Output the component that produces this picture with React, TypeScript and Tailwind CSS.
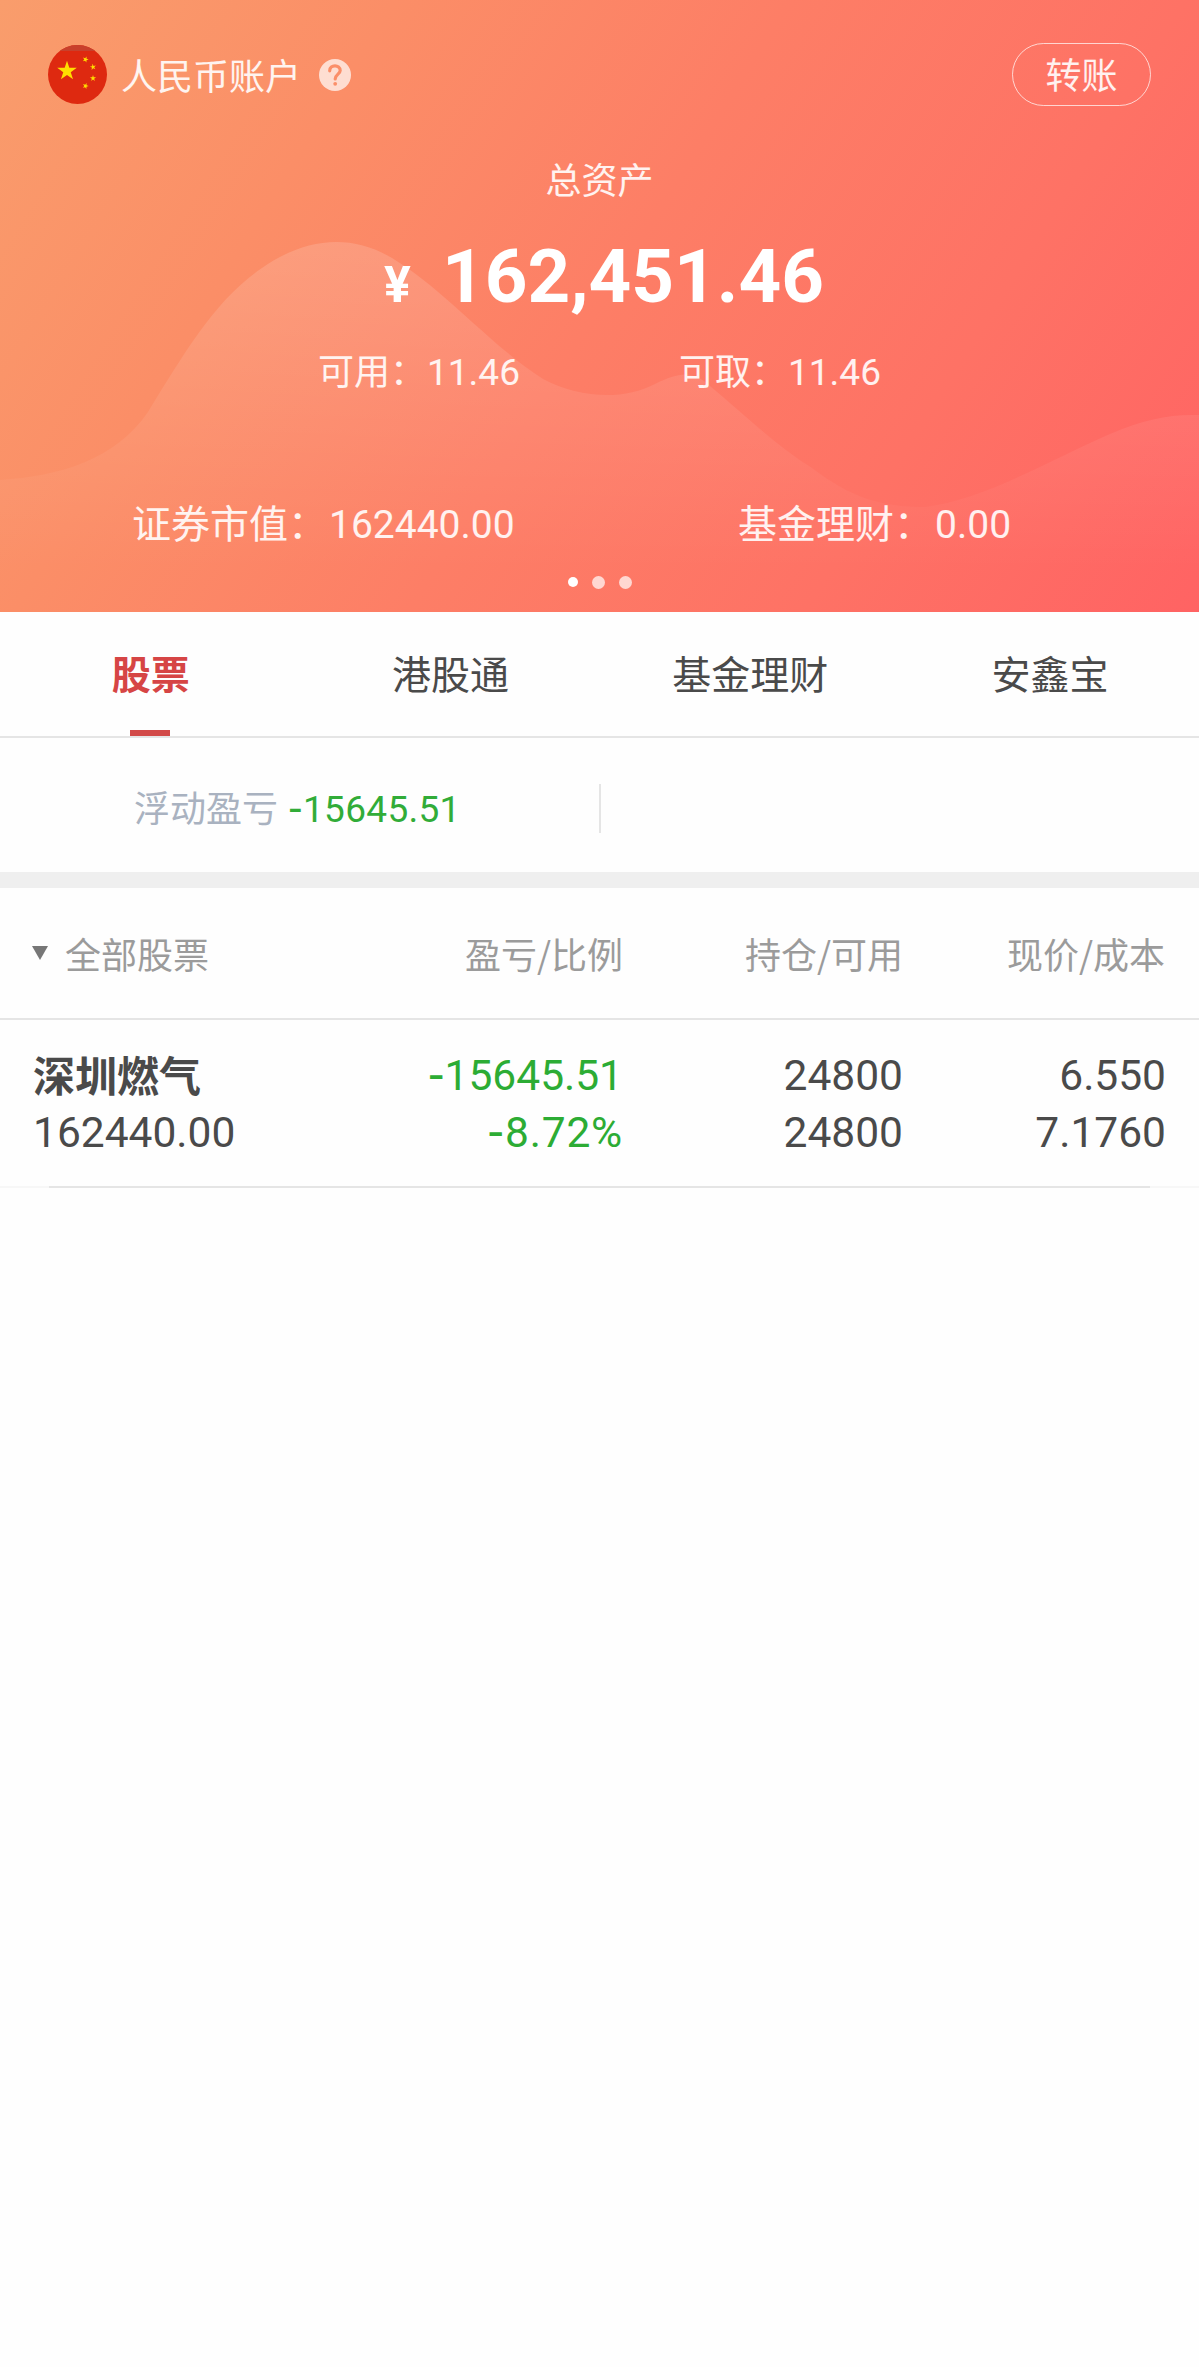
const tabs = ['股票', '港股通', '基金理财', '安鑫宝']

const columns = ['盈亏/比例', '持仓/可用', '现价/成本']

const holdings = [
  {
    name: '深圳燃气',
    marketValue: '162440.00',
    profit: '-15645.51',
    ratio: '-8.72%',
    position: '24800',
    available: '24800',
    price: '6.550',
    cost: '7.1760',
  },
]

function Num({ children, className = '' }: { children: string; className?: string }) {
  const negative = children.startsWith('-')
  return (
    <span className={`whitespace-nowrap font-[Roboto,'Liberation_Sans',sans-serif] ${className}`}>
      {/* Roboto's own hyphen is too short for a minus sign */}
      {negative && <span className="font-['DejaVu_Sans',sans-serif] text-[1.1em] leading-none">-</span>}
      {negative ? children.slice(1) : children}
    </span>
  )
}

function FlagIcon() {
  const star = 'M0 -1 L0.225 -0.309 L0.951 -0.309 L0.363 0.118 L0.588 0.809 L0 0.382 L-0.588 0.809 L-0.363 0.118 L-0.951 -0.309 L-0.225 -0.309 Z'
  return (
    <svg className="w-[59px] h-[59px]" viewBox="0 0 59 59">
      <defs>
        <clipPath id="flag-clip">
          <circle cx="29.5" cy="29.5" r="29.5" />
        </clipPath>
      </defs>
      <g clipPath="url(#flag-clip)">
        <rect width="59" height="59" fill="#de2910" />
        <rect width="59" height="6" fill="#c8402c" />
      </g>
      <g fill="#ffde00">
        <path d={star} transform="translate(19 26) scale(10.3)" />
        <path d={star} transform="translate(37.5 14.5) rotate(20) scale(3.2)" />
        <path d={star} transform="translate(45 22) rotate(-10) scale(3.2)" />
        <path d={star} transform="translate(45 33.3) scale(3.2)" />
        <path d={star} transform="translate(37.5 41) rotate(20) scale(3.2)" />
      </g>
    </svg>
  )
}

function HelpIcon() {
  return (
    <svg className="w-8 h-8" viewBox="0 0 32 32" fill="none">
      <circle cx="16" cy="16" r="16" fill="#fff" fillOpacity="0.7" />
      <path d="M10.7 11.8C10.7 5.2 21.2 5.2 21.2 11.6C21.2 15 16.2 15.4 16.2 20" stroke="#fb8f69" strokeWidth="3.2" strokeLinecap="round" />
      <circle cx="16.2" cy="24.8" r="1.9" fill="#fb8f69" />
    </svg>
  )
}

function Wave() {
  return (
    <svg className="absolute inset-0 w-full h-full" viewBox="0 0 1199 612" preserveAspectRatio="none">
      <defs>
        <linearGradient id="wave" x1="0" y1="242" x2="0" y2="570" gradientUnits="userSpaceOnUse">
          <stop offset="0" stopColor="#fff" stopOpacity="0.15" />
          <stop offset="1" stopColor="#fff" stopOpacity="0" />
        </linearGradient>
      </defs>
      <path
        fill="url(#wave)"
        d="M0 480 C60 476 115 460 148 412 C185 352 215 300 262 268 C305 238 350 233 392 258 C445 290 490 345 543 379 C580 399 625 400 655 384 C680 372 692 370 710 386 C745 415 775 445 812 468 C850 497 880 507 925 507 C985 500 1060 455 1110 434 C1145 419 1170 414 1199 415 V612 H0 Z"
      />
    </svg>
  )
}

function AssetHeader() {
  return (
    <header className="relative h-[612px] bg-[linear-gradient(122deg,#f99d6c_0%,#fb8e67_25%,#fd7e66_50%,#fe7265_75%,#ff6363_100%)] text-white/90">
      <Wave />
      <div className="relative h-full flex flex-col items-center">
        <div className="w-full px-12 pt-[43px] flex items-center justify-between">
          <div className="flex items-center">
            <FlagIcon />
            <span className="ml-[14px] pb-[2px] text-[36px] leading-[60px]">人民币账户</span>
            <span className="ml-[18px]">
              <HelpIcon />
            </span>
          </div>
          <button className="w-[139px] h-[63px] pb-[2px] rounded-full border border-white/70 text-[36px] leading-[59px] text-center">
            转账
          </button>
        </div>

        <p className="mt-[46px] text-[36px] leading-[52px]">总资产</p>

        <div className="w-full pl-[384px] mt-[34px] h-[78px] flex items-baseline font-bold text-white">
          <Num className="w-[58px] text-[50px] leading-[78px]">¥</Num>
          <Num className="text-[74.5px] leading-[78px]">162,451.46</Num>
        </div>

        <div className="w-full pl-[318px] mt-[26px] h-[54px] flex text-[36px] leading-[54px]">
          <div className="w-[361px]">
            可用：<Num className="ml-px text-[37px]">11.46</Num>
          </div>
          <div>
            可取：<Num className="ml-px text-[37px]">11.46</Num>
          </div>
        </div>

        <div className="w-full pl-[132px] mt-[96px] h-[58px] flex text-[39px] leading-[58px]">
          <div className="w-[606px]">
            证券市值：<Num className="ml-[2px]">162440.00</Num>
          </div>
          <div>
            基金理财：<Num className="ml-[2px]">0.00</Num>
          </div>
        </div>

        <div className="mt-[25px] h-[14px] flex items-center gap-[14px]">
          <span className="w-[10px] h-[10px] rounded-full bg-white" />
          <span className="w-[13px] h-[13px] rounded-full bg-white/70" />
          <span className="w-[13px] h-[13px] rounded-full bg-white/70" />
        </div>
      </div>
    </header>
  )
}

export default function App() {
  return (
    <div className="w-[1199px] min-h-[2367px] bg-[#fefefe] text-[#4a4a4a] font-['Noto_Sans_CJK_SC',sans-serif]">
      <AssetHeader />

      <nav className="h-[126px] grid grid-cols-4 border-b-2 border-[#e5e5e5]">
        {tabs.map((tab, i) => (
          <div key={tab} className="flex flex-col items-center justify-between">
            <span className={`pt-[31px] pl-[2px] text-[39px] leading-[58px] ${i === 0 ? 'font-bold text-[#d64545]' : ''}`}>
              {tab}
            </span>
            {i === 0 && <span className="w-10 h-[6px] bg-[#d24a48]" />}
          </div>
        ))}
      </nav>

      <section className="h-[134px] pl-[134px] pt-[6px] flex items-center">
        <div className="w-[465px] text-[36px] leading-[54px] text-[#a9b2c0]">
          浮动盈亏
          <Num className="ml-[10px] text-[37px] tracking-[0.3px] text-[#31ac38]">-15645.51</Num>
        </div>
        <span className="w-[2px] h-[49px] bg-[#e5e5e5]" />
      </section>

      <div className="h-4 bg-[#efefef]" />

      <section>
        <div className="h-[132px] pl-8 grid grid-cols-[312px_279px_280px_262px] items-center border-b-2 border-[#e5e5e5] text-[36px] text-[#9b9b9b]">
          <div className="flex items-center">
            <svg className="w-4 h-[14px]" viewBox="0 0 16 14">
              <path d="M0 0H16L8 14Z" fill="#777" />
            </svg>
            <span className="ml-[17px]">全部股票</span>
          </div>
          {columns.map((column) => (
            <span key={column} className="text-right">{column}</span>
          ))}
        </div>

        {holdings.map((item) => (
          <div key={item.name}>
            <div className="h-[166px] pl-[33px] pt-[27px] grid grid-cols-[310px_280px_280px_263px] text-[42.5px] leading-[57px]">
              <div className="flex flex-col items-start">
                <span className="pb-1 text-[42px] leading-[53px] font-bold">{item.name}</span>
                <Num>{item.marketValue}</Num>
              </div>
              <div className="flex flex-col items-end text-[#2cac34]">
                <Num>{item.profit}</Num>
                <Num className="tracking-[0.8px]">{item.ratio}</Num>
              </div>
              <div className="flex flex-col items-end">
                <Num>{item.position}</Num>
                <Num>{item.available}</Num>
              </div>
              <div className="flex flex-col items-end">
                <Num>{item.price}</Num>
                <Num>{item.cost}</Num>
              </div>
            </div>
            <div className="h-[2px] px-[49px] bg-[#f7f7f7]">
              <div className="h-full bg-[#e5e5e5]" />
            </div>
          </div>
        ))}
      </section>
    </div>
  )
}
